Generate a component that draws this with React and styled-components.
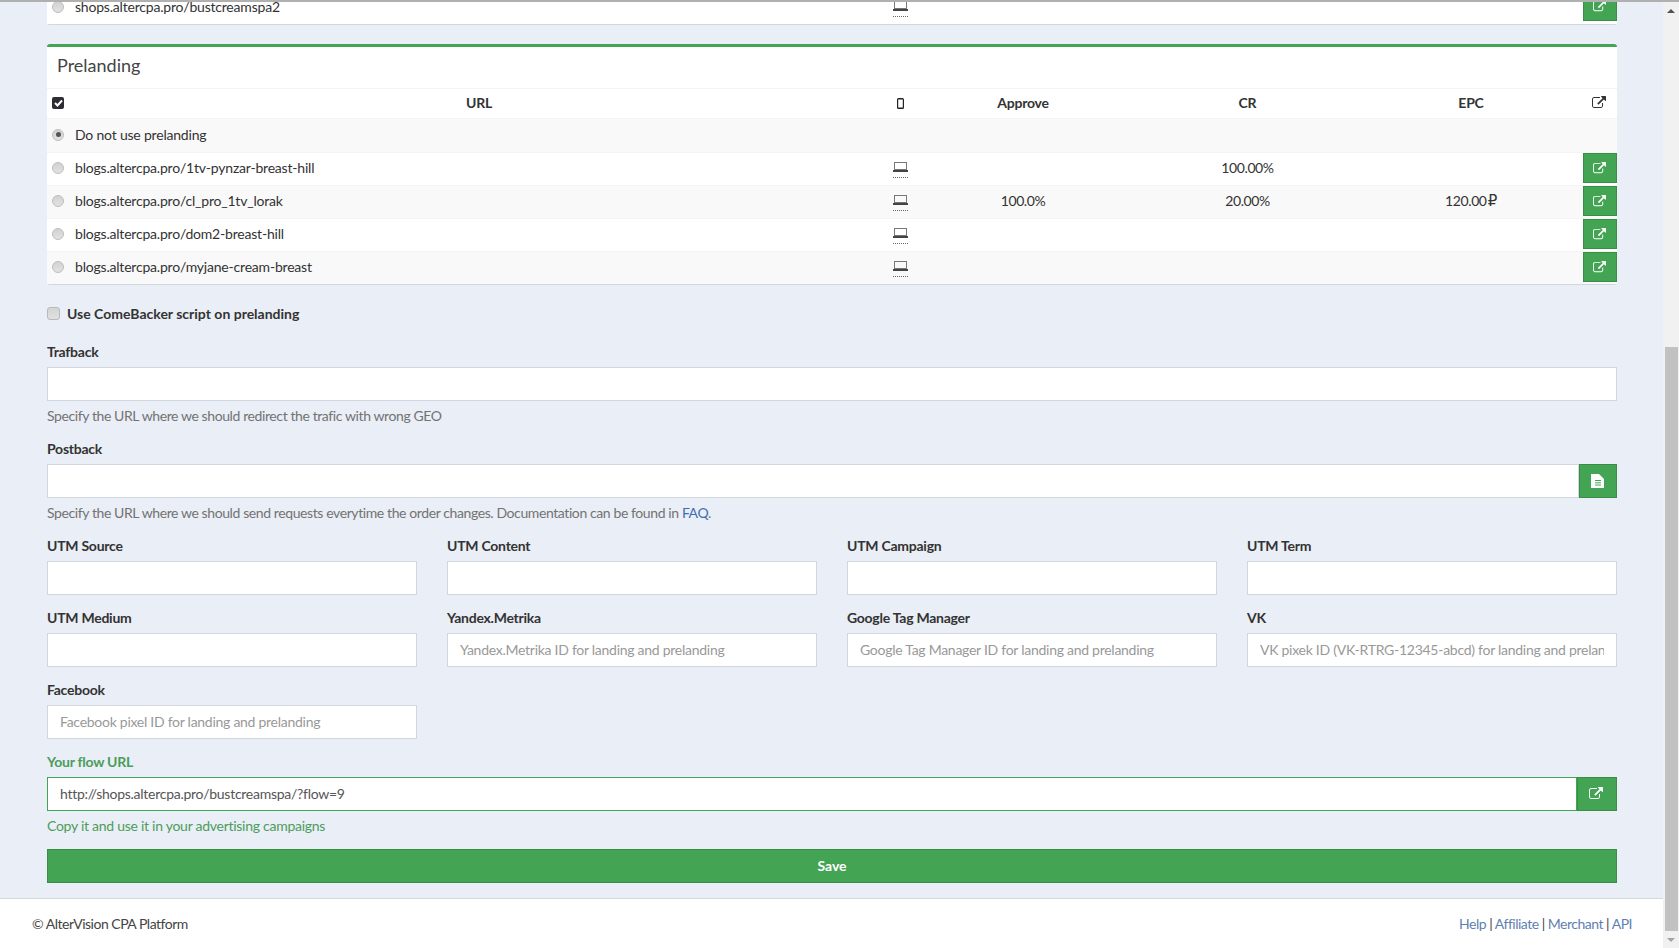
import React from 'react'
import styled, { createGlobalStyle } from 'styled-components'

const GlobalStyle = createGlobalStyle`
  html, body {
    margin: 0;
    padding: 0;
    height: 100%;
    overflow: hidden;
  }
  body {
    font-family: Lato, "Noto Sans", sans-serif;
    font-size: 14px;
    color: #333;
  }
  * { box-sizing: border-box; }
`

const GREEN = '#43a453'
const GREEN_TEXT = '#4a9d5b'

const Page = styled.div`
  display: flex;
  height: 948px;
  width: 1679px;
  overflow: hidden;
  border-top: 2px solid #b0b0b0;
`

const Main = styled.div`
  flex: 1;
  min-width: 0;
  display: flex;
  flex-direction: column;
  background: #eaeef6;
`

const Content = styled.div`
  flex: 1;
  margin-top: -11px;
  padding: 0 46px 0 47px;
`

const Scrollbar = styled.div`
  width: 16px;
  display: flex;
  flex-direction: column;
  background: #f1f1f1;
`

const ScrollArrow = styled.div`
  height: 17px;
  display: flex;
  align-items: center;
  justify-content: center;
  &::before {
    content: '';
    border-left: 4px solid transparent;
    border-right: 4px solid transparent;
    border-${p => (p.$down ? 'top' : 'bottom')}: 4px solid ${p => (p.$down ? '#a3a3a3' : '#505050')};
  }
`

const ScrollTrack = styled.div`
  flex: 1;
  display: flex;
  flex-direction: column;
  justify-content: flex-end;
`

const ScrollThumb = styled.div`
  height: 584px;
  margin: 0 1px 0 2px;
  background: #c1c1c1;
`

const Panel = styled.div`
  background: #fff;
  border-bottom: 1px solid #d2d6de;
  border-radius: ${p => (p.$head ? '3px' : '0 0 3px 3px')};
  border-top: ${p => (p.$head ? `3px solid ${GREEN}` : '0')};
  margin-bottom: ${p => (p.$head ? '18px' : '19px')};
`

const PanelTitle = styled.h3`
  margin: 0;
  height: 41px;
  padding: 0 10px 6px;
  display: flex;
  align-items: center;
  font-size: 18px;
  font-weight: 400;
  color: #444;
`

const Row = styled.div`
  display: grid;
  grid-template-columns: 20px 824px 19px 226px 223px 224px 34px;
  align-items: center;
  height: ${p => p.$h || 33}px;
  border-top: ${p => (p.$first ? '0' : '1px solid #f4f4f4')};
  background: ${p => (p.$odd ? '#f9f9f9' : '#fff')};
`

const Cell = styled.div`
  text-align: ${p => p.$align || 'center'};
  padding-left: ${p => p.$pad || 0}px;
  padding-bottom: 3px;
  font-weight: ${p => (p.$bold ? 700 : 400)};
  letter-spacing: -0.2px;
  white-space: nowrap;
  color: #333;
`

const NumCell = styled(Cell)`
  letter-spacing: -0.4px;
`

const DeviceCell = styled.div`
  display: flex;
  justify-content: center;
`

const IconCell = styled.div`
  display: flex;
  justify-content: center;
  padding: 0 2px 1px 0;
`

const Rouble = styled.span`
  font-family: "DejaVu Sans", sans-serif;
  font-size: 15px;
  margin-left: -2px;
`

const RadioCell = styled.div`
  padding: 0 0 2px 5px;
  display: flex;
`

const Radio = styled.span`
  width: 12px;
  height: 12px;
  border-radius: 50%;
  background: linear-gradient(#d2d2d2, #e2e2e2);
  border: 1px solid #bdbdbd;
  display: flex;
  align-items: center;
  justify-content: center;
  &::after {
    content: '';
    display: ${p => (p.$on ? 'block' : 'none')};
    width: 5px;
    height: 5px;
    border-radius: 50%;
    background: #555;
  }
`

const Checked = styled.span`
  width: 12px;
  height: 12px;
  border-radius: 2px;
  background: #2d2d33;
  display: flex;
  align-items: center;
  justify-content: center;
  color: #fff;
`

const Device = styled.span`
  display: inline-flex;
  margin-top: 2px;
  border-bottom: 1px dotted #666;
  padding-bottom: 5px;
  color: #444;
`

const LinkButton = styled.a`
  align-self: start;
  width: 34px;
  height: 30px;
  padding-right: 2px;
  display: flex;
  align-items: center;
  justify-content: center;
  background: ${GREEN};
  border: 1px solid #398d47;
  color: #fff;
`

const CheckLine = styled.label`
  display: flex;
  align-items: center;
  gap: 7px;
  font-weight: 700;
  height: 20px;
  margin-bottom: 19px;
`

const Box = styled.span`
  width: 13px;
  height: 13px;
  background: linear-gradient(#d4d4d4, #e0e0e0);
  border: 1px solid #b9b9b9;
  border-radius: 3px;
`

const Field = styled.div`
  margin-bottom: ${p => p.$mb ?? 0}px;
`

const Label = styled.label`
  display: block;
  height: 20px;
  line-height: 20px;
  margin-bottom: 5px;
  font-weight: 700;
  letter-spacing: -0.25px;
  color: ${p => (p.$ok ? GREEN_TEXT : '#333')};
`

const Input = styled.input`
  display: block;
  width: 100%;
  height: 34px;
  padding: 5px 12px 7px;
  border: 1px solid ${p => (p.$ok ? GREEN : '#d2d6de')};
  background: #fff;
  font: inherit;
  letter-spacing: -0.27px;
  color: #555;
  outline: 0;
  &::placeholder { color: #999; opacity: 1; }
`

const InputGroup = styled.div`
  display: flex;
`

const AddOn = styled.a`
  flex: none;
  width: ${p => p.$w}px;
  height: 34px;
  padding-right: 2px;
  display: flex;
  align-items: center;
  justify-content: center;
  background: ${GREEN};
  border: 1px solid #398d47;
  color: #fff;
`

const Help = styled.p`
  margin: 5px 0 0;
  height: 20px;
  line-height: 20px;
  letter-spacing: ${p => (p.$ok ? '-0.27px' : '-0.4px')};
  color: ${p => (p.$ok ? GREEN_TEXT : '#737373')};
  a { color: #3c6eb4; text-decoration: none; }
`

const Grid = styled.div`
  display: grid;
  grid-template-columns: repeat(4, 370px);
  column-gap: 30px;
  row-gap: 13px;
  margin-bottom: 13px;
`

const SaveButton = styled.button`
  display: block;
  width: 100%;
  height: 34px;
  margin-top: 13px;
  padding: 0 0 2px;
  background: ${GREEN};
  border: 1px solid #398d47;
  color: #fff;
  font: inherit;
  font-weight: 700;
`

const Footer = styled.footer`
  height: 50px;
  flex: none;
  padding: 0 31px 0 32px;
  display: flex;
  align-items: center;
  justify-content: space-between;
  background: #fff;
  border-top: 1px solid #d2d6de;
  letter-spacing: -0.5px;
  color: #444;
`

const FooterLinks = styled.div`
  color: #444;
  a { color: #5f7fb0; text-decoration: none; }
`

const ExternalIcon = ({ size = 13 }) => (
  <svg width={size} height={size} viewBox="0 0 1792 1792" fill="currentColor">
    <path d="M1408 928v320q0 119-84.5 203.5t-203.5 84.5h-832q-119 0-203.5-84.5t-84.5-203.5v-832q0-119 84.5-203.5t203.5-84.5h704q14 0 23 9t9 23v64q0 14-9 23t-23 9h-704q-66 0-113 47t-47 113v832q0 66 47 113t113 47h832q66 0 113-47t47-113v-320q0-14 9-23t23-9h64q14 0 23 9t9 23zm384-864v512q0 26-19 45t-45 19-45-19l-176-176-652 652q-10 10-23 10t-23-10l-114-114q-10-10-10-23t10-23l652-652-176-176q-19-19-19-45t19-45 45-19h512q26 0 45 19t19 45z" />
  </svg>
)

const LaptopIcon = () => (
  <svg width="15" height="10" viewBox="0 0 15 10">
    <rect x="1.5" y="0.5" width="12" height="7" fill="none" stroke="#777" />
    <rect x="0" y="8" width="15" height="2" fill="currentColor" />
  </svg>
)

const MobileIcon = () => (
  <svg width="7" height="11" viewBox="0 0 7 11">
    <path d="M1.5 0h4A1.5 1.5 0 0 1 7 1.5v8A1.5 1.5 0 0 1 5.5 11h-4A1.5 1.5 0 0 1 0 9.5v-8A1.5 1.5 0 0 1 1.5 0zM1.2 1.5v8h4.600v-8z" fill="#222" fillRule="evenodd" />
  </svg>
)

const CheckIcon = () => (
  <svg width="9" height="8" viewBox="0 0 9 8">
    <path d="M1 4l2.500 2.500L8 1.500" fill="none" stroke="currentColor" strokeWidth="2" />
  </svg>
)

const FileIcon = () => (
  <svg width="13" height="14" viewBox="0 0 13 14">
    <path d="M0 0h8l5 5v9H0z" fill="#fff" />
    <path d="M4 6.500h6M4 8.800h6M4 11h6" stroke={GREEN} strokeWidth="1" />
  </svg>
)

const rows = [
  { url: 'blogs.altercpa.pro/1tv-pynzar-breast-hill', cr: '100.00%' },
  { url: 'blogs.altercpa.pro/cl_pro_1tv_lorak', approve: '100.0%', cr: '20.00%', epc: '120.00' },
  { url: 'blogs.altercpa.pro/dom2-breast-hill' },
  { url: 'blogs.altercpa.pro/myjane-cream-breast' },
]

const utmFields = [
  { label: 'UTM Source' },
  { label: 'UTM Content' },
  { label: 'UTM Campaign' },
  { label: 'UTM Term' },
  { label: 'UTM Medium' },
  { label: 'Yandex.Metrika', hint: 'Yandex.Metrika ID for landing and prelanding' },
  { label: 'Google Tag Manager', hint: 'Google Tag Manager ID for landing and prelanding' },
  { label: 'VK', hint: 'VK pixek ID (VK-RTRG-12345-abcd) for landing and prelanding' },
  { label: 'Facebook', hint: 'Facebook pixel ID for landing and prelanding' },
]

const App = () => (
  <>
    <GlobalStyle />
    <Page>
      <Main>
        <Content>
          <Panel>
            <Row $first>
              <RadioCell><Radio /></RadioCell>
              <Cell $align="left" $pad={8}>shops.altercpa.pro/bustcreamspa2</Cell>
              <DeviceCell><Device><LaptopIcon /></Device></DeviceCell>
              <Cell /><Cell /><Cell />
              <LinkButton><ExternalIcon /></LinkButton>
            </Row>
          </Panel>
          <Panel $head>
            <PanelTitle>Prelanding</PanelTitle>
            <Row $h={30}>
              <RadioCell><Checked><CheckIcon /></Checked></RadioCell>
              <Cell $bold>URL</Cell>
              <DeviceCell><MobileIcon /></DeviceCell>
              <Cell $bold>Approve</Cell>
              <Cell $bold>CR</Cell>
              <Cell $bold>EPC</Cell>
              <IconCell><ExternalIcon size={14} /></IconCell>
            </Row>
            <Row $odd $h={34}>
              <RadioCell><Radio $on /></RadioCell>
              <Cell $align="left" $pad={8}>Do not use prelanding</Cell>
            </Row>
            {rows.map((r, i) => (
              <Row key={r.url} $odd={i % 2 === 1}>
                <RadioCell><Radio /></RadioCell>
                <Cell $align="left" $pad={8}>{r.url}</Cell>
                <DeviceCell><Device><LaptopIcon /></Device></DeviceCell>
                <NumCell>{r.approve}</NumCell>
                <NumCell>{r.cr}</NumCell>
                <NumCell>{r.epc}{r.epc && <> <Rouble>₽</Rouble></>}</NumCell>
                <LinkButton><ExternalIcon /></LinkButton>
              </Row>
            ))}
          </Panel>
          <CheckLine><Box />Use ComeBacker script on prelanding</CheckLine>
          <Field $mb={13}>
            <Label>Trafback</Label>
            <Input />
            <Help>Specify the URL where we should redirect the trafic with wrong GEO</Help>
          </Field>
          <Field $mb={13}>
            <Label>Postback</Label>
            <InputGroup>
              <Input />
              <AddOn $w={38}><FileIcon /></AddOn>
            </InputGroup>
            <Help>
              Specify the URL where we should send requests everytime the order changes. Documentation can be found in <a>FAQ</a>.
            </Help>
          </Field>
          <Grid>
            {utmFields.map(f => (
              <div key={f.label}>
                <Label>{f.label}</Label>
                <Input placeholder={f.hint} />
              </div>
            ))}
          </Grid>
          <Field>
            <Label $ok>Your flow URL</Label>
            <InputGroup>
              <Input $ok readOnly value="http://shops.altercpa.pro/bustcreamspa/?flow=9" />
              <AddOn $w={40}><ExternalIcon size={14} /></AddOn>
            </InputGroup>
            <Help $ok>Copy it and use it in your advertising campaigns</Help>
          </Field>
          <SaveButton>Save</SaveButton>
        </Content>
        <Footer>
          <span>© AlterVision CPA Platform</span>
          <FooterLinks>
            <a>Help</a> | <a>Affiliate</a> | <a>Merchant</a> | <a>API</a>
          </FooterLinks>
        </Footer>
      </Main>
      <Scrollbar>
        <ScrollArrow />
        <ScrollTrack><ScrollThumb /></ScrollTrack>
        <ScrollArrow $down />
      </Scrollbar>
    </Page>
  </>
)

export default App
